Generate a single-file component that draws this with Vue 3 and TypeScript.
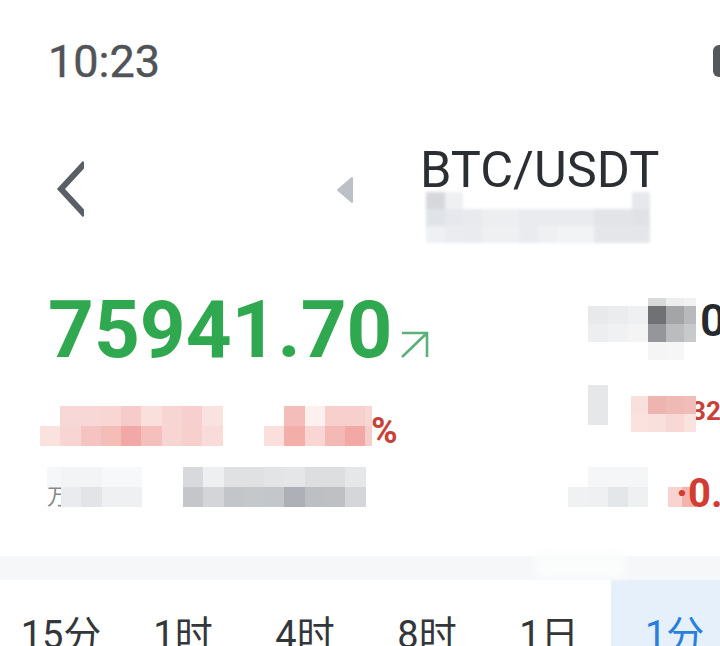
<script setup lang="ts">
type Cell = string | null
interface Mosaic { name: string; rows: Cell[][] }

const tabs = ['15分', '1时', '4时', '8时', '1日']

const mosaics: Mosaic[] = [
  { name: 'sub', rows: [
    ['#d6d8db', '#eef0f2', null, null, null, null, null, null, null, null, null, '#e6e8eb'],
    ['#e0e3e8', '#e6e8ed', '#e8eaed', '#eceef0', '#eceef1', '#e9ebee', '#e9ebee', '#e9ebee', '#e9ebee', '#e2e4e8', '#e2e4e8', '#e0e2e6'],
    ['#eef0f3', '#eaecf0', '#e9ebee', '#eef0f2', '#eef0f2', '#e9ebee', '#eef0f2', '#f2f3f5', '#f2f3f5', '#e4e6e9', '#e4e6e9', '#e4e6e9']
  ] },
  { name: 'red-a', rows: [
    [null, '#f7d8d6', '#f7d8d6', '#f8d6d4', '#f6cccb', '#fae0dd', '#f7d5d3', '#f6cfce', '#fae2e0'],
    ['#fae2df', '#f8d5d3', '#f5c3c1', '#f5bdb8', '#f2a8a6', '#f5bfbb', '#f8d4d2', '#f7cfcd', '#f9dcd9']
  ] },
  { name: 'red-b', rows: [
    [null, '#f4bdb9', '#fdf0ef', '#f7d0ce', '#f7cfcd', '#f8d6d4'],
    ['#fadfdc', '#f3aea9', '#f9d6d3', '#f5b9b5', '#f2a9a5', '#f7cdcb']
  ] },
  { name: 'pale-a', rows: [
    ['#f6f7f8', '#f3f4f6', '#f3f4f6', '#f7f8f9', '#f7f8f9'],
    [null, '#e9ebee', '#e2e4e8', '#eef0f2', '#eef0f2']
  ] },
  { name: 'grey-a', rows: [
    ['#d7d9dc', '#eeeff0', '#dfe1e3', '#dfe1e3', '#e2e4e6', '#e4e6e7', '#dcdee0', '#dcdee0', '#e6e7e9'],
    ['#c4c6c9', '#d3d5d8', '#c2c5c9', '#c5c8cb', '#c3c6ca', '#adb0b6', '#bcbfc3', '#bec0c4', '#d5d6d9']
  ] },
  { name: 'stat-a', rows: [
    [null, null, null, '#d8d9da', '#eeeeef', '#f2f2f3'],
    ['#e8e9eb', '#ebecee', '#eff0f1', '#6f7175', '#a3a5a7', '#b8b9ba'],
    ['#edeef0', '#f0f1f2', '#f4f4f5', '#949699', '#bbbcbe', '#c8c9ca'],
    [null, null, null, '#f5f5f6', '#f6f6f7', null]
  ] },
  { name: 'stat-b1', rows: [
    ['#e5e7e9'],
    ['#e5e7e9']
  ] },
  { name: 'stat-b2', rows: [
    ['#f8e0dd', '#eeb4b0', '#efbab6', '#f0bdb9'],
    ['#fae2df', '#f9e0dd', '#f8d8d5', '#fae2df']
  ] },
  { name: 'stat-c1', rows: [
    [null, '#f5f6f7', '#f4f6f7', '#f4f6f7'],
    ['#f0f1f2', '#eff0f2', '#e4e7e9', '#eef0f1']
  ] },
  { name: 'stat-c2', rows: [
    ['#f9d3d0', '#f4b3ad']
  ] },
  { name: 'smudge', rows: [
    ['#fbfcfc']
  ] }
]
</script>

<template>
  <main class="page">
    <header class="status">
      <span class="time">10:23</span>
      <span class="battery"></span>
    </header>

    <nav class="nav">
      <svg class="back" width="28" height="56" viewBox="0 0 28 56" aria-hidden="true">
        <path d="M29 2 L5 28 L29 54" fill="none" stroke="#5a5f66" stroke-width="6" />
      </svg>
      <svg class="caret" width="18" height="28" viewBox="0 0 18 28" aria-hidden="true">
        <path d="M16 2 L2 14 L16 26 Z" fill="#bcc1c7" stroke="#bcc1c7" stroke-width="2" stroke-linejoin="round" />
      </svg>
      <h1 class="pair">BTC/USDT</h1>
    </nav>

    <section class="quote">
      <div class="price-line">
        <span class="price">75941.70</span>
        <svg class="trend" width="28" height="28" viewBox="0 0 28 28" aria-hidden="true">
          <path d="M1 26 L26 2 M1 2 H26 V26" fill="none" stroke="#5cb07a" stroke-width="2.6" />
        </svg>
      </div>
      <div class="stat-value dark">0</div>
      <div class="change-line">
        <span class="percent">%</span>
      </div>
      <div class="stat-value red small">32</div>
      <div class="volume-line">
        <span class="unit">万</span>
      </div>
      <div class="stat-value red bold">·0.</div>
    </section>

    <div class="band"></div>

    <div class="tabs">
      <span v-for="tab in tabs" :key="tab" class="tab">{{ tab }}</span>
      <span class="tab active">1分</span>
    </div>

    <div
      v-for="m in mosaics"
      :key="m.name"
      class="mosaic"
      :class="m.name"
    >
      <template v-for="(row, r) in m.rows" :key="r">
        <i
          v-for="(cell, c) in row"
          :key="c"
          class="cell"
          :style="{ background: cell ?? 'transparent' }"
        ></i>
      </template>
    </div>
  </main>
</template>

<style>
html, body { margin: 0; background: #fff; }
</style>

<style scoped>
.page {
  position: relative;
  width: 720px;
  height: 646px;
  overflow: hidden;
  display: flex;
  flex-direction: column;
  background: #fff;
  font-family: Roboto, "Noto Sans CJK SC", sans-serif;
}
.status {
  height: 122px;
  flex: none;
  display: flex;
  align-items: center;
  justify-content: space-between;
  padding-left: 48px;
  box-sizing: border-box;
}
.time {
  font-size: 45px;
  color: #505357;
  line-height: 1;
  -webkit-text-stroke: 0.4px #505357;
}
.battery {
  width: 20px;
  height: 32px;
  margin-right: -13px;
  border-radius: 6px;
  background: #55585b;
}
.nav {
  height: 150px;
  flex: none;
  display: flex;
  align-items: flex-start;
  padding-left: 56px;
  box-sizing: border-box;
}
.back { margin-top: 39px; }
.caret { margin: 54px 0 0 252px; }
.pair {
  margin: 20px 0 0 66px;
  font-size: 50.5px;
  font-weight: 400;
  line-height: 56px;
  color: #2b2e33;
  white-space: nowrap;
}
.quote {
  height: 284px;
  flex: none;
  display: grid;
  grid-template-columns: 700px 20px;
  grid-template-rows: 100px 86px 70px;
}
.price-line {
  display: flex;
  align-items: flex-start;
  padding-left: 48px;
}
.price {
  margin-top: 12px;
  font-size: 80px;
  font-weight: 700;
  line-height: 92px;
  color: #2fa84f;
  white-space: nowrap;
}
.trend { margin: 59px 0 0 8px; }
.stat-value {
  white-space: nowrap;
  width: 60px;
  line-height: 1;
}
.dark {
  font-size: 45px;
  font-weight: 600;
  color: #26292e;
  margin-top: 26px;
}
.change-line {
  padding: 41px 0 0 371px;
  box-sizing: border-box;
}
.percent {
  display: block;
  font-size: 36px;
  font-weight: 700;
  line-height: 1;
  color: #c8423a;
}
.small {
  font-size: 26px;
  font-weight: 700;
  margin: 26px 0 0 -9px;
}
.volume-line {
  padding: 28px 0 0 47px;
  box-sizing: border-box;
}
.unit {
  display: block;
  font-size: 22px;
  line-height: 1;
  color: #85888c;
}
.red { color: #d33c30; }
.small.red { color: #c8423a; }
.bold {
  position: relative;
  z-index: 1;
  font-size: 40px;
  font-weight: 700;
  margin: 16px 0 0 -24px;
}
.band {
  height: 24px;
  flex: none;
  background: #f5f7f9;
}
.tabs {
  display: flex;
  flex: none;
  height: 66px;
}
.tab {
  flex: none;
  box-sizing: border-box;
  padding-top: 31px;
  width: 122px;
  text-align: center;
  font-size: 38px;
  line-height: 48px;
  color: #33363a;
  white-space: nowrap;
}
.active {
  width: 109px;
  margin-left: 1px;
  padding-left: 34px;
  text-align: left;
  background: #e6f0fb;
  color: #2a7fdc;
}
.mosaic {
  position: absolute;
  display: grid;
  grid-auto-rows: 20px;
  filter: blur(0.4px);
}
.cell { display: block; }
.sub { left: 426px; top: 192px; grid-template-columns: repeat(12, 18.7px); grid-auto-rows: 17px; filter: blur(1.5px); }
.red-a { left: 40px; top: 406px; grid-template-columns: repeat(9, 20.3px); }
.red-b { left: 264px; top: 406px; grid-template-columns: repeat(5, 20.3px) 7px; }
.pale-a { left: 47px; top: 467px; grid-template-columns: 14px repeat(4, 20.3px); }
.grey-a { left: 183px; top: 467px; grid-template-columns: repeat(9, 20.3px); }
.stat-a { left: 588px; top: 298px; grid-template-columns: 20px 20px 20px 18px 18px 12px; grid-template-rows: 8px 18px 18px 18px; }
.stat-b1 { left: 588px; top: 385px; grid-template-columns: 20px; }
.stat-b2 { left: 631px; top: 396px; grid-template-columns: 17px 18px 18px 12px; grid-auto-rows: 18px; }
.stat-c1 { left: 568px; top: 467px; grid-template-columns: repeat(4, 20px); }
.stat-c2 { left: 668px; top: 487px; grid-template-columns: repeat(2, 14px); }
.smudge { left: 535px; top: 552px; grid-template-columns: 90px; grid-auto-rows: 26px; filter: blur(4px); }
</style>
